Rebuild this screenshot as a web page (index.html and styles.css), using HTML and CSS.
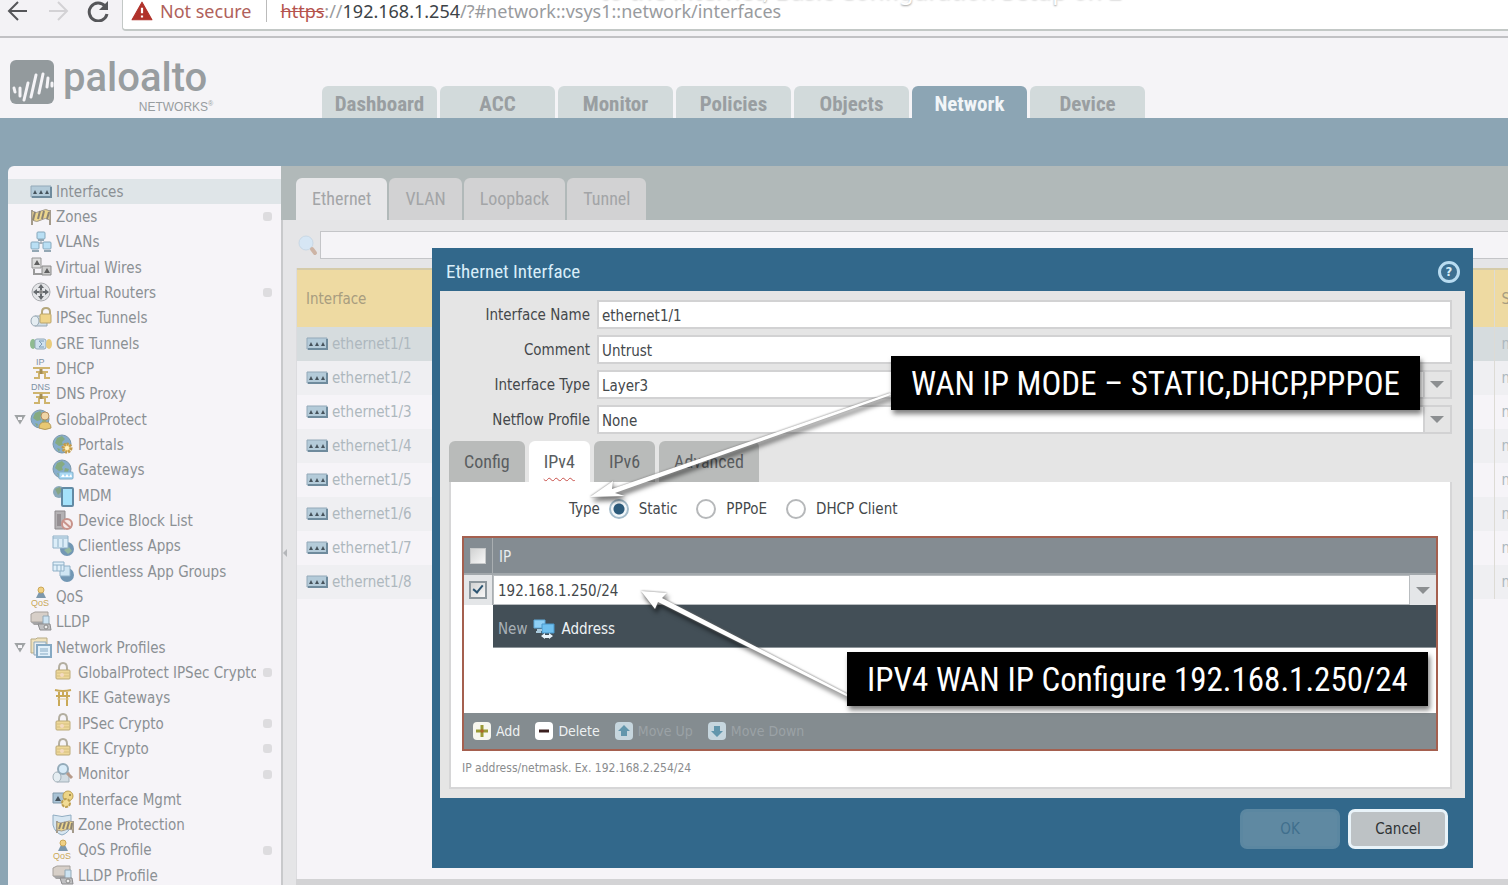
FILE: index.html
```html
<!DOCTYPE html>
<html lang="en">
<head>
    <meta charset="UTF-8">
    <meta name="viewport" content="width=device-width, initial-scale=1.0">
    <title>Network - Interfaces</title>
    <link rel="stylesheet" href="styles.css">
</head>
<body>

<!-- icon set -->
<svg class="sprite" aria-hidden="true">
    <symbol id="i-port" viewBox="0 0 22 22">
        <path d="M1 5h20v11H1z" fill="#b4cbd9"/><path d="M1 5h20v11H1z" fill="none" stroke="#93a9b9"/><path d="M2 16h19V6" fill="none" stroke="#6f8b9d" stroke-width="2"/>
        <path d="M3 13l2-4 2 4zM9 13l2-4 2 4zM15 13l2-4 2 4z" fill="#46535c"/>
    </symbol>
    <symbol id="i-zones" viewBox="0 0 22 22">
        <path d="M2 4v15M20 4v15" stroke="#a49b8c" stroke-width="2"/><path d="M2 5q4 3 9 0t9 0v9q-5-3-9 0t-9 0z" fill="#ecd68d" stroke="#a39c90"/>
        <path d="M5 6l-2 8M10 5l-2 8M14 5l-2 8M19 6l-2 7" stroke="#8b8373" stroke-width="2"/>
    </symbol>
    <symbol id="i-vlan" viewBox="0 0 22 22">
        <path d="M11 9v4M5 15v-3h12v3" fill="none" stroke="#8d9ba5"/>
        <g fill="#b9dff4" stroke="#87a8bc"><rect x="7" y="1" width="8" height="7" rx="1"/><rect x="1" y="11" width="8" height="7" rx="1"/><rect x="13" y="11" width="8" height="7" rx="1"/></g>
        <path d="M8 9h6M2 20h7M14 20h7" stroke="#93a7b4" stroke-width="2"/>
    </symbol>
    <symbol id="i-wire" viewBox="0 0 22 22">
        <path d="M4 12v5h9" fill="none" stroke="#999" stroke-width="2"/><path d="M2 1h9v10H2z" fill="#ddd" stroke="#949494"/><path d="M12 9h9v9h-9z" fill="#ccc" stroke="#8a8a8a"/>
        <path d="M4 8l3-5 3 5zM14 16l3-5 3 5z" fill="#606060"/>
    </symbol>
    <symbol id="i-router" viewBox="0 0 22 22">
        <circle cx="11" cy="10" r="9" fill="#e4e5e8" stroke="#a7a9ad"/><circle cx="11" cy="10" r="2" fill="#888"/>
        <path d="M11 2l3 4h-2v2h-2V6H8zM11 18l3-4h-2v-2h-2v2H8zM3 10l4-3v2h2v2H7v2zM19 10l-4-3v2h-2v2h2v2z" fill="#666a6e"/>
    </symbol>
    <symbol id="i-ipsec" viewBox="0 0 22 22">
        <path d="M5 9h12v10H5z" fill="#cfdde8" stroke="#96a6b2"/><ellipse cx="5" cy="14" rx="4" ry="5" fill="#e5edf2" stroke="#96a6b2"/>
        <path d="M12 7V5q0-4 4-4t4 4v2" fill="none" stroke="#b5a77c" stroke-width="2"/><rect x="10" y="7" width="11" height="9" rx="1" fill="#efd48a" stroke="#bba56c"/>
    </symbol>
    <symbol id="i-gre" viewBox="0 0 22 22">
        <ellipse cx="3" cy="11" rx="3" ry="5" fill="#8fbb91"/><rect x="5" y="6" width="11" height="10" rx="2" fill="#cfe1ef" stroke="#93a9b9"/><ellipse cx="19" cy="11" rx="3" ry="5" fill="#e9cc7d"/><path d="M14 8H9l3 3-3 3h5" fill="none" stroke="#7f9db6"/>
    </symbol>
    <symbol id="i-dhcp" viewBox="0 0 22 22">
        <text x="6" y="7" class="glyph">IP</text><path d="M3 10h17M6 14h12M4 20h5v-5h6v5h5" fill="none" stroke="#cfb46e" stroke-width="2"/><path d="M11 11v5" stroke="#a48d52" stroke-width="3"/>
    </symbol>
    <symbol id="i-dns" viewBox="0 0 22 22">
        <text x="1" y="7" class="glyph">DNS</text><path d="M3 10h17M6 14h12M4 20h5v-5h6v5h5" fill="none" stroke="#cfb46e" stroke-width="2"/><path d="M11 11v5" stroke="#a48d52" stroke-width="3"/>
    </symbol>
    <symbol id="i-globe" viewBox="0 0 22 22">
        <circle cx="10" cy="10" r="9" fill="#86adcb" stroke="#7c98ab"/><path d="M5 4l5-2 3 3-3 3 1 3-4 1-4-3zM13 9l4 1-2 5-3-2zM5 14l3 1-1 3z" fill="#86aa80"/>
    </symbol>
    <symbol id="i-gp" viewBox="0 0 22 22">
        <use href="#i-globe"/><circle cx="15" cy="7" r="4" fill="#f0d5a7" stroke="#b18d63"/><path d="M9 19q0-6 6-6t6 6q-6 3-12 0z" fill="#e8c872" stroke="#b59c5c"/>
    </symbol>
    <symbol id="i-portal" viewBox="0 0 22 22">
        <use href="#i-globe"/><circle cx="15" cy="14" r="4" fill="#f0cf7d" stroke="#c29a4b" stroke-width="3" stroke-dasharray="2 1"/><circle cx="15" cy="14" r="2" fill="#fff2c4"/>
    </symbol>
    <symbol id="i-gateway" viewBox="0 0 22 22">
        <use href="#i-globe"/><rect x="7" y="13" width="14" height="7" rx="1" fill="#a8d8f3" stroke="#7facc7"/><path d="M9 18l2-3 2 3zM13 18l2-3 2 3zM17 18l2-3 1 3z" fill="#fff"/>
    </symbol>
    <symbol id="i-mdm" viewBox="0 0 22 22">
        <circle cx="7" cy="7" r="6" fill="#8aa9ba"/><path d="M3 4l5-2 2 4-4 4z" fill="#86a484"/><rect x="10" y="3" width="11" height="18" rx="1" fill="#a5e2fb" stroke="#628aa4" stroke-width="2"/>
    </symbol>
    <symbol id="i-block" viewBox="0 0 22 22">
        <path d="M3 1h10v18H3z" fill="#b4b1b4" stroke="#8d898c"/><path d="M5 4h4v12H5z" fill="#958f93"/><circle cx="15" cy="14" r="5" fill="#f4e8e5" stroke="#c8928a" stroke-width="2"/><path d="M11 11l8 7" stroke="#c8928a" stroke-width="2"/>
    </symbol>
    <symbol id="i-app" viewBox="0 0 22 22">
        <circle cx="15" cy="14" r="7" fill="#7297b4"/><path d="M12 15l5-3 3 4-4 3z" fill="#93b8a0"/><path d="M1 1h15v12H1z" fill="#dcedf8" stroke="#8fb0c7"/><path d="M1 3h15M6 4v8M11 4v8" stroke="#8fb0c7"/>
    </symbol>
    <symbol id="i-appgroup" viewBox="0 0 22 22">
        <circle cx="15" cy="14" r="7" fill="#7297b4"/><path d="M8 5h10v10H8z" fill="#cfe5f3" stroke="#8fb0c7"/><path d="M1 1h11v9H1z" fill="#e1f0fa" stroke="#8fb0c7"/><path d="M1 4h11M5 4v6M9 4v6" stroke="#8fb0c7"/>
    </symbol>
    <symbol id="i-qos" viewBox="0 0 22 22">
        <path d="M6 12l3-6h4l3 6z" fill="#7d98ad"/><circle cx="11" cy="4" r="3" fill="#f1d185" stroke="#cba758"/><text x="1" y="20" class="glyph gold">QoS</text>
    </symbol>
    <symbol id="i-lldp" viewBox="0 0 22 22">
        <path d="M1 3l4-2h13v10H1z" fill="#d7cfc8" stroke="#a6a19c"/><path d="M1 11h12v3H4z" fill="#a5a4a5"/><path d="M13 5h6v11h-6z" fill="#cde3f2" stroke="#93a9b7"/><path d="M8 13h12l1 6H10z" fill="#c0c0c2" stroke="#8c8c8e"/><circle cx="16" cy="16" r="2" fill="#eee" stroke="#888"/>
    </symbol>
    <symbol id="i-profiles" viewBox="0 0 22 22">
        <path d="M1 2h5l1-1h10v15H1z" fill="#efe2bd" stroke="#b7aa85"/><path d="M4 5h12v13H4z" fill="#e8eef2" stroke="#90a9ba"/><path d="M7 8h14v12H7z" fill="#e2f0fa" stroke="#86a9c3" stroke-width="2"/><path d="M10 12h8M10 14h8M10 17h8" stroke="#86a9c3"/>
    </symbol>
    <symbol id="i-lock" viewBox="0 0 22 22">
        <path d="M7 9V6q0-5 4-5t4 5v3" fill="none" stroke="#b3aea0" stroke-width="2"/><rect x="4" y="8" width="14" height="9" rx="1" fill="#eed89a" stroke="#bba977"/><path d="M5 11h12M5 14h12" stroke="#d6be80"/><circle cx="10" cy="13" r="2" fill="#f4dac2"/>
    </symbol>
    <symbol id="i-torii" viewBox="0 0 22 22">
        <path d="M3 3q8 2 16 0M4 9h14M11 4v4M7 5v14M15 5v14" fill="none" stroke="#c9a958" stroke-width="2"/><path d="M5 12h12" stroke="#dfc98e"/>
    </symbol>
    <symbol id="i-monitor" viewBox="0 0 22 22">
        <path d="M5 9h12v10H5z" fill="#d2dce3" stroke="#a3b0b9"/><ellipse cx="5" cy="14" rx="4" ry="5" fill="#e5edf2" stroke="#a3b0b9"/><circle cx="11" cy="6" r="5" fill="#d8ebf8" stroke="#94abba" stroke-width="2"/><path d="M15 10l5 5" stroke="#b79a8a" stroke-width="3"/>
    </symbol>
    <symbol id="i-mgmt" viewBox="0 0 22 22">
        <path d="M1 4h14v10H1z" fill="#a9c3d6" stroke="#8199aa"/><path d="M3 12l3-5 3 5z" fill="#46535c"/><circle cx="16" cy="7" r="5" fill="#ecd486" stroke="#bd9f52"/><circle cx="14" cy="14" r="4" fill="#f2dc94" stroke="#bd9f52" stroke-width="2" stroke-dasharray="3 1"/><circle cx="18" cy="6" r="1" fill="#8c7a47"/>
    </symbol>
    <symbol id="i-zoneprot" viewBox="0 0 22 22">
        <path d="M1 1q9 3 18 0v10q-2 8-9 10-7-2-9-10z" fill="#d7e6f1" stroke="#8facc2"/><path d="M5 7v12M21 7v12" stroke="#a49b8c" stroke-width="2"/><path d="M5 8q3 2 8 0t8 0v8q-5-2-8 0t-8 0z" fill="#ecd68d" stroke="#a39c90"/><path d="M9 9l-2 6M13 8l-2 7M17 8l-2 7M20 9l-1 6" stroke="#8b8373" stroke-width="2"/>
    </symbol>
    <symbol id="i-search" viewBox="0 0 22 22">
        <circle cx="8" cy="8" r="7" fill="#d6e6f4" stroke="#c9d8e5"/><path d="M14 14l3 4" stroke="#cdb4a5" stroke-width="4" stroke-linecap="round"/>
    </symbol>
</svg>

<div class="browser-bar">
    <div class="nav-icons">
        <svg viewBox="0 0 22 22" aria-hidden="true"><path d="M20 11H3M11 2l-9 9 9 9" fill="none" stroke="#555659" stroke-width="2"/></svg>
        <svg viewBox="0 0 22 22" aria-hidden="true"><path d="M2 11h17M11 2l9 9-9 9" fill="none" stroke="#d3d2d5" stroke-width="2"/></svg>
        <svg viewBox="0 0 22 22" aria-hidden="true"><path d="M18 6a9 9 0 1 0 2 8" fill="none" stroke="#555659" stroke-width="3"/><path d="M21 1v9h-9z" fill="#555659"/></svg>
    </div>
    <div class="address-bar">
        <svg class="warning" viewBox="0 0 20 18" aria-hidden="true"><path d="M10 1L19 17H1z" fill="#b0322b" stroke="#b0322b" stroke-linejoin="round"/><path d="M10 6v5M10 13v2" stroke="#fff" stroke-width="2"/></svg>
        <span class="not-secure">Not secure</span>
        <span class="url"><s>https</s>://<b>192.168.1.254</b>/?#network::vsys1::network/interfaces</span>
    </div>
    <div class="video-title">to the internet, Basic Configuration Setup on 2</div>
</div>

<header class="app-header">
    <div class="logo">
        <svg viewBox="0 0 44 44" aria-hidden="true">
            <rect width="44" height="44" rx="6" fill="#939a9d"/>
            <g stroke="#f5f4f7" stroke-width="3" stroke-linecap="round"><path d="M4 28l1 4M10 28l0 8M18 23l-4 17M26 15l-5 22M33 14l-4 19M38 18l-1 9M42 23l0 3"/></g>
        </svg>
        <div class="logo-text">
            <span class="logo-name">paloalto</span>
            <span class="logo-sub">NETWORKS<sup>®</sup></span>
        </div>
    </div>
    <nav class="main-tabs">
        <a href="#">Dashboard</a>
        <a href="#">ACC</a>
        <a href="#">Monitor</a>
        <a href="#">Policies</a>
        <a href="#">Objects</a>
        <a href="#" class="active">Network</a>
        <a href="#">Device</a>
    </nav>
</header>

<div class="workspace">
    <aside class="sidebar">
        <ul class="tree">
            <li class="selected"><a href="#"><svg><use href="#i-port"/></svg>Interfaces</a></li>
            <li class="dot"><a href="#"><svg><use href="#i-zones"/></svg>Zones</a></li>
            <li><a href="#"><svg><use href="#i-vlan"/></svg>VLANs</a></li>
            <li><a href="#"><svg><use href="#i-wire"/></svg>Virtual Wires</a></li>
            <li class="dot"><a href="#"><svg><use href="#i-router"/></svg>Virtual Routers</a></li>
            <li><a href="#"><svg><use href="#i-ipsec"/></svg>IPSec Tunnels</a></li>
            <li><a href="#"><svg><use href="#i-gre"/></svg>GRE Tunnels</a></li>
            <li><a href="#"><svg><use href="#i-dhcp"/></svg>DHCP</a></li>
            <li><a href="#"><svg><use href="#i-dns"/></svg>DNS Proxy</a></li>
            <li class="open"><a href="#"><svg><use href="#i-gp"/></svg>GlobalProtect</a></li>
            <li class="child"><a href="#"><svg><use href="#i-portal"/></svg>Portals</a></li>
            <li class="child"><a href="#"><svg><use href="#i-gateway"/></svg>Gateways</a></li>
            <li class="child"><a href="#"><svg><use href="#i-mdm"/></svg>MDM</a></li>
            <li class="child"><a href="#"><svg><use href="#i-block"/></svg>Device Block List</a></li>
            <li class="child"><a href="#"><svg><use href="#i-app"/></svg>Clientless Apps</a></li>
            <li class="child"><a href="#"><svg><use href="#i-appgroup"/></svg>Clientless App Groups</a></li>
            <li><a href="#"><svg><use href="#i-qos"/></svg>QoS</a></li>
            <li><a href="#"><svg><use href="#i-lldp"/></svg>LLDP</a></li>
            <li class="open"><a href="#"><svg><use href="#i-profiles"/></svg>Network Profiles</a></li>
            <li class="child dot"><a href="#"><svg><use href="#i-lock"/></svg>GlobalProtect IPSec Crypto</a></li>
            <li class="child"><a href="#"><svg><use href="#i-torii"/></svg>IKE Gateways</a></li>
            <li class="child dot"><a href="#"><svg><use href="#i-lock"/></svg>IPSec Crypto</a></li>
            <li class="child dot"><a href="#"><svg><use href="#i-lock"/></svg>IKE Crypto</a></li>
            <li class="child dot"><a href="#"><svg><use href="#i-monitor"/></svg>Monitor</a></li>
            <li class="child"><a href="#"><svg><use href="#i-mgmt"/></svg>Interface Mgmt</a></li>
            <li class="child"><a href="#"><svg><use href="#i-zoneprot"/></svg>Zone Protection</a></li>
            <li class="child dot"><a href="#"><svg><use href="#i-qos"/></svg>QoS Profile</a></li>
            <li class="child"><a href="#"><svg><use href="#i-lldp"/></svg>LLDP Profile</a></li>
        </ul>
    </aside>

    <main class="content">
        <nav class="sub-tabs">
            <a href="#" class="active">Ethernet</a>
            <a href="#">VLAN</a>
            <a href="#">Loopback</a>
            <a href="#">Tunnel</a>
        </nav>
        <div class="content-body">
            <div class="splitter"></div>
            <div class="list">
                <div class="search-row">
                    <svg><use href="#i-search"/></svg>
                    <input type="text" aria-label="Search interfaces">
                </div>
                <div class="table-wrap">
                    <table class="interfaces">
                        <thead>
                            <tr><th>Interface</th><th class="edge">Security Zone</th></tr>
                        </thead>
                        <tbody>
                            <tr><td><svg><use href="#i-port"/></svg>ethernet1/1</td><td class="edge">none</td></tr>
                            <tr><td><svg><use href="#i-port"/></svg>ethernet1/2</td><td class="edge">none</td></tr>
                            <tr><td><svg><use href="#i-port"/></svg>ethernet1/3</td><td class="edge">none</td></tr>
                            <tr><td><svg><use href="#i-port"/></svg>ethernet1/4</td><td class="edge">none</td></tr>
                            <tr><td><svg><use href="#i-port"/></svg>ethernet1/5</td><td class="edge">none</td></tr>
                            <tr><td><svg><use href="#i-port"/></svg>ethernet1/6</td><td class="edge">none</td></tr>
                            <tr><td><svg><use href="#i-port"/></svg>ethernet1/7</td><td class="edge">none</td></tr>
                            <tr><td><svg><use href="#i-port"/></svg>ethernet1/8</td><td class="edge">none</td></tr>
                        </tbody>
                    </table>
                </div>
                <div class="scroll-track"></div>
            </div>
        </div>
    </main>
</div>

<section class="dialog" role="dialog" aria-labelledby="dialogTitle">
    <div class="dialog-header">
        <h2 id="dialogTitle">Ethernet Interface</h2>
        <button class="help" type="button" aria-label="Help">?</button>
    </div>
    <form class="dialog-body">
        <div class="fields">
            <label for="ifName">Interface Name</label>
            <input type="text" id="ifName" value="ethernet1/1">
            <label for="ifComment">Comment</label>
            <input type="text" id="ifComment" value="Untrust">
            <label for="ifType">Interface Type</label>
            <div class="select-box"><select id="ifType"><option>Layer3</option></select></div>
            <label for="netflow">Netflow Profile</label>
            <div class="select-box"><select id="netflow"><option>None</option></select></div>
        </div>

        <div class="form-tabs">
            <button type="button">Config</button>
            <button type="button" class="active invalid">IPv4</button>
            <button type="button">IPv6</button>
            <button type="button">Advanced</button>
        </div>

        <div class="panel">
            <div class="type-row" role="radiogroup" aria-labelledby="typeLabel">
                <span id="typeLabel">Type</span>
                <label><input type="radio" name="type" checked>Static</label>
                <label><input type="radio" name="type">PPPoE</label>
                <label><input type="radio" name="type">DHCP Client</label>
            </div>

            <div class="ip-grid">
                <div class="grid-head">
                    <span class="check-cell"><input type="checkbox" aria-label="Select all"></span>
                    <span class="head-label">IP</span>
                </div>
                <div class="grid-row">
                    <span class="check-cell"><input type="checkbox" aria-label="Select address" checked></span>
                    <input type="text" class="ip-input" aria-label="IP" value="192.168.1.250/24">
                    <button type="button" class="trigger" aria-label="Show addresses"></button>
                </div>
                <div class="new-row">
                    New
                    <svg viewBox="0 0 22 22" aria-hidden="true"><path d="M1 2h11v8H1z" fill="#8fd0f5" stroke="#5fa9d8"/><path d="M9 6h12v9H9z" fill="#6fc0ef" stroke="#4a97c9"/><path d="M4 12h5M3 14h5" stroke="#a9c9dc" stroke-width="2"/><path d="M8 18l4-3v2h4v-2l4 3-4 3v-1h-4v1z" fill="#e8f4fb"/></svg>
                    <a href="#">Address</a>
                </div>
                <div class="grid-space"></div>
                <div class="grid-foot">
                    <button type="button"><svg viewBox="0 0 18 18"><rect width="18" height="18" rx="4" fill="#f7f6ee"/><path d="M9 3v12M3 9h12" stroke="#9a9a35" stroke-width="3"/><path d="M9 7v4M7 9h4" stroke="#b5552a"/></svg>Add</button>
                    <button type="button"><svg viewBox="0 0 18 18"><rect width="18" height="18" rx="4" fill="#fff"/><path d="M4 9h10" stroke="#3b2020" stroke-width="3"/></svg>Delete</button>
                    <button type="button" disabled><svg viewBox="0 0 18 18"><rect width="18" height="18" rx="4" fill="#c6d6de"/><path d="M9 3l6 6h-3v5H6V9H3z" fill="#6296ac"/></svg>Move Up</button>
                    <button type="button" disabled><svg viewBox="0 0 18 18"><rect width="18" height="18" rx="4" fill="#c6d6de"/><path d="M9 15l6-6h-3V4H6v5H3z" fill="#6296ac"/></svg>Move Down</button>
                </div>
            </div>
            <p class="hint">IP address/netmask. Ex. 192.168.2.254/24</p>
        </div>
    </form>
    <div class="dialog-footer">
        <button type="button" class="btn" disabled>OK</button>
        <button type="button" class="btn cancel">Cancel</button>
    </div>

    <!-- tutorial notes over the dialog -->
    <svg class="arrows" aria-hidden="true">
        <path d="M158 249l23-16-1 8L458 145l1 2L183 245l10 3z"/>
        <path d="M209 343l26 2-5 5 191 99-1 2-194-97-3 7z"/>
    </svg>
    <div class="note note-mode">WAN IP MODE – STATIC,DHCP,PPPOE</div>
    <div class="note note-ip">IPV4 WAN IP Configure 192.168.1.250/24</div>
</section>

</body>
</html>
```
FILE: styles.css
```css
*, *::before, *::after {
    box-sizing: border-box;
}
body {
    display: flex;
    flex-direction: column;
    height: 100vh;
    margin: 0;
    overflow: hidden;
    position: relative;
    background-color: #8ca5b4;
    color: #8b9094;
    font-family: "DejaVu Sans Condensed", "DejaVu Sans", sans-serif;
    font-size: 15px;
}
a {
    color: inherit;
    text-decoration: none;
}
button, input, select {
    font: inherit;
    color: inherit;
}
.sprite {
    position: absolute;
    width: 0;
    height: 0;
}
.glyph {
    font: 9px "Liberation Sans", Arial, sans-serif;
    fill: #7d92a5;
}
.glyph.gold {
    fill: #c9a958;
}

/* browser bar */
.browser-bar {
    display: flex;
    flex: none;
    height: 38px;
    position: relative;
    overflow: hidden;
    background-color: #f3f2f5;
    border-bottom: 2px solid #c1c1c4;
    font-family: "Noto Sans", sans-serif;
    font-size: 18px;
}
.nav-icons {
    display: flex;
    gap: 18px;
    padding-left: 7px;
    width: 122px;
}
.nav-icons svg {
    width: 22px;
    height: 22px;
}
.address-bar {
    display: flex;
    flex: 1;
    align-items: center;
    height: 31px;
    padding: 0 0 7px 8px;
    background-color: #fff;
    border: solid #c3c8c6;
    border-width: 0 0 2px 1px;
    border-radius: 0 0 0 4px;
    white-space: nowrap;
}
.warning {
    width: 22px;
    height: 20px;
    margin-right: 7px;
}
.not-secure {
    color: #b0615b;
    padding-right: 14px;
    margin-right: 14px;
    border-right: 1px solid #bbb;
    line-height: 22px;
}
.url {
    color: #999b9e;
}
.url s {
    color: #b5534d;
}
.url b {
    color: #3c4347;
    font-weight: normal;
}
.video-title {
    position: absolute;
    top: -25px;
    left: 600px;
    color: #fff;
    font-size: 24px;
    line-height: 30px;
    text-shadow: 0 1px 2px #999;
    white-space: nowrap;
}

/* header */
.app-header {
    display: flex;
    flex: none;
    align-items: flex-end;
    height: 80px;
    background-color: #f5f4f7;
}
.logo {
    display: flex;
    gap: 9px;
    width: 322px;
    padding: 0 0 5px 10px;
    color: #989da0;
}
.logo svg {
    width: 44px;
    height: 44px;
    margin-top: 5px;
}
.logo-text {
    display: flex;
    flex-direction: column;
    font-family: Roboto, sans-serif;
}
.logo-name {
    font-size: 40px;
    line-height: 46px;
    font-weight: 500;
}
.logo-sub {
    align-self: flex-end;
    margin-right: -6px;
    font: 12px/12px "Liberation Sans", Arial, sans-serif;
}
.logo-sub sup {
    font-size: 7px;
    line-height: 0;
}
.main-tabs {
    display: flex;
    gap: 3px;
}
.main-tabs a {
    width: 115px;
    height: 32px;
    border-radius: 6px 6px 0 0;
    background-color: #d2dadb;
    color: #999ea1;
    font: bold 21px/36px "Liberation Sans Narrow", "Roboto Condensed", sans-serif;
    text-align: center;
}
.main-tabs a.active {
    background-color: #8ca5b4;
    color: #f1f5f8;
}

/* sidebar */
.workspace {
    display: flex;
    flex: 1;
    min-height: 0;
    padding: 48px 0 0 8px;
}
.sidebar {
    width: 273px;
    flex: none;
    overflow: hidden;
    background-color: #f6f4f8;
    border-radius: 6px 0 0 0;
}
.tree {
    list-style: none;
    margin: 0;
    padding: 13px 0 0;
}
.tree li {
    display: flex;
    align-items: center;
    height: 25px;
    padding: 0 9px 0 6px;
}
.tree li:nth-child(3n) {
    height: 26px;
}
.tree li.selected {
    background-color: #dfe5e8;
}
.tree a {
    display: flex;
    flex: 1;
    align-items: center;
    gap: 4px;
    min-width: 0;
    margin-left: 16px;
    overflow: hidden;
    white-space: nowrap;
}
.tree svg {
    flex: none;
    width: 22px;
    height: 22px;
}
.tree .child a {
    margin-left: 38px;
}
.tree .open::before {
    content: "";
    width: 12px;
    height: 10px;
    margin-right: -12px;
    background: linear-gradient(#f6f4f8, #f6f4f8) 50% 2px / 4px 3px no-repeat #a0a3a5;
    clip-path: polygon(0 0, 100% 0, 50% 100%);
}
.tree .dot::after {
    content: "";
    width: 9px;
    height: 9px;
    margin-left: 7px;
    border-radius: 3px;
    background-color: #dddcdf;
}

/* interface list */
.content {
    display: flex;
    flex: 1;
    flex-direction: column;
    min-width: 0;
    background-color: #e5e5e7;
}
.sub-tabs {
    display: flex;
    gap: 2px;
    align-items: flex-end;
    height: 54px;
    padding-left: 15px;
    background-color: #b1b9b9;
}
.sub-tabs a {
    height: 42px;
    padding: 0 16px;
    border-radius: 6px 6px 0 0;
    background-color: #d2d2d3;
    color: #a3a5a7;
    font: 18px/42px "Liberation Sans Narrow", "Roboto Condensed", sans-serif;
}
.sub-tabs a.active {
    background-color: #e7e7e9;
}
.content-body {
    display: flex;
    flex: 1;
    min-height: 0;
}
.splitter {
    display: flex;
    align-items: center;
    width: 15px;
    border-left: 2px solid #c8c9cb;
}
.splitter::before {
    content: "";
    border: 4px solid transparent;
    border-right-color: #b4b6b9;
    border-left: 0;
}
.list {
    display: flex;
    flex: 1;
    flex-direction: column;
    min-width: 0;
}
.search-row {
    display: flex;
    padding: 11px 0 9px 2px;
}
.search-row svg {
    width: 22px;
    height: 22px;
    margin-top: 4px;
}
.search-row input {
    flex: 1;
    min-width: 0;
    height: 28px;
    border: 1px solid #c4c5c8;
    border-right: 0;
    background-color: #f5f4f7;
}
.table-wrap {
    flex: 1;
    min-height: 0;
    overflow: hidden;
    background-color: #f6f4f8;
    border-left: 1px solid #dcdcdf;
}
.interfaces {
    width: 100%;
    table-layout: fixed;
    border-collapse: collapse;
}
.interfaces th {
    height: 58px;
    padding: 0 9px;
    background-color: #eedaa2;
    border-top: 2px solid #d5cba9;
    color: #a89d7f;
    font-weight: normal;
    text-align: left;
}
.interfaces td {
    height: 34px;
    padding: 0 9px;
    color: #aeb8be;
    vertical-align: middle;
}
.interfaces td svg {
    width: 22px;
    height: 22px;
    margin-right: 4px;
    vertical-align: middle;
}
.interfaces .edge {
    width: 14px;
    padding: 0 0 0 7px;
    overflow: hidden;
    border-left: 1px solid #dddbd5;
    white-space: nowrap;
}
.interfaces tbody tr:nth-child(even) {
    background-color: #efeff2;
}
.interfaces tbody tr:first-child {
    background-color: #d6dcde;
}
.scroll-track {
    height: 6px;
    background-color: #d3d3d5;
}

/* dialog */
.dialog {
    position: absolute;
    top: 248px;
    left: 432px;
    right: 35px;
    padding: 0 8px;
    background-color: #32688b;
    color: #44484b;
}
.dialog-header {
    display: flex;
    align-items: center;
    justify-content: space-between;
    height: 43px;
    padding: 4px 5px 0 6px;
}
.dialog-header h2 {
    margin: 0;
    color: #d9eef9;
    font: 19px/24px "Liberation Sans Narrow", "Roboto Condensed", sans-serif;
}
.help {
    width: 22px;
    height: 22px;
    padding: 0;
    border: 3px solid #b9dcf1;
    border-radius: 50%;
    background-color: #3c6f91;
    color: #d9eef9;
    font-size: 13px;
    font-weight: bold;
    line-height: 15px;
}
.dialog-body {
    padding: 9px 13px 9px 9px;
    background-color: #e5e5e5;
}
.fields {
    display: grid;
    grid-template-columns: 141px 1fr;
    gap: 6px 7px;
    align-items: center;
}
.fields > label {
    text-align: right;
}
.fields input, .fields select {
    width: 100%;
    height: 29px;
    padding: 2px 3px 0;
    border: 2px solid #d2d2d3;
    border-radius: 0;
    background-color: #fff;
}
.fields select {
    appearance: none;
    display: block;
}
.select-box {
    position: relative;
}
.select-box::after {
    content: "";
    position: absolute;
    top: 0;
    right: 0;
    width: 29px;
    height: 29px;
    border: 2px solid #d2d2d3;
    background-color: #e5e5e5;
    pointer-events: none;
}
.select-box::before, .trigger::before {
    content: "";
    border: 7px solid transparent;
    border-top-color: #8c8f91;
    border-bottom: 0;
}
.select-box::before {
    position: absolute;
    z-index: 1;
    top: 11px;
    right: 8px;
    pointer-events: none;
}
.form-tabs {
    display: flex;
    gap: 4px;
    margin-top: 7px;
}
.form-tabs button {
    height: 41px;
    padding: 0 15px;
    border: 0;
    border-radius: 6px 6px 0 0;
    background-color: #b9bbba;
    color: #595d60;
    font: 18px/40px "Liberation Sans Narrow", "Roboto Condensed", sans-serif;
}
.form-tabs button.active {
    background-color: #fff;
}
.form-tabs button.invalid {
    text-decoration: underline wavy #c8504a 1px;
    text-underline-offset: 9px;
}
.panel {
    padding: 12px 12px 11px 11px;
    background-color: #fff;
    border: 2px solid #d6d6d7;
    border-top: 0;
}
.type-row {
    display: flex;
    align-items: center;
    height: 30px;
    padding-left: 107px;
}
.type-row label {
    display: flex;
    align-items: center;
    gap: 10px;
    margin-left: 9px;
}
.type-row label + label {
    margin-left: 19px;
}
.type-row input {
    appearance: none;
    width: 20px;
    height: 20px;
    margin: 0;
    border: 2px solid #b6b8ba;
    border-radius: 50%;
    background-color: #fff;
}
.type-row input:checked {
    border-color: #a4bccb;
    background: radial-gradient(circle, #2d5b7b 5px, #f2f7fa 6px);
}
.ip-grid {
    margin-top: 12px;
    border: 2px solid #a5604f;
    background-color: #fff;
}
.grid-head, .grid-row {
    display: flex;
    align-items: stretch;
}
.grid-head {
    height: 37px;
    background-color: #848c92;
    color: #e9edef;
    border-bottom: 2px solid #a2a8ac;
}
.check-cell {
    display: flex;
    align-items: center;
    justify-content: center;
    width: 29px;
    border-right: 1px solid #a9aeb1;
}
.check-cell input {
    appearance: none;
    width: 16px;
    height: 16px;
    margin: 0;
    background: linear-gradient(135deg, #d2d3d3, #f7f7f7);
    border: 1px solid #c7c9ca;
}
.check-cell input:checked {
    width: 18px;
    height: 18px;
    border: 2px solid #8d979d;
}
.check-cell input:checked::before {
    content: "";
    display: block;
    width: 6px;
    height: 10px;
    margin: 0 0 0 4px;
    border: solid #2d5673;
    border-width: 0 2px 2px 0;
    transform: rotate(40deg);
}
.head-label {
    padding-left: 6px;
    line-height: 38px;
}
.grid-row {
    height: 30px;
    background-color: #e4e6e8;
}
.ip-input {
    flex: 1;
    min-width: 0;
    padding: 2px 4px 0;
    border: 1px solid #b9bdc0;
    background-color: #fff;
}
.trigger {
    display: flex;
    align-items: center;
    justify-content: center;
    width: 26px;
    padding: 0;
    border: 0;
    background-color: #e4e6e8;
}
.new-row {
    display: flex;
    align-items: center;
    gap: 6px;
    height: 43px;
    margin-left: 29px;
    padding: 5px 5px 0;
    background-color: #434f57;
    border-bottom: 1px solid #8d959a;
    color: #a9b1b6;
}
.new-row svg {
    width: 22px;
    height: 22px;
}
.new-row a {
    color: #eef2f4;
}
.grid-space {
    height: 65px;
}
.grid-foot {
    display: flex;
    gap: 15px;
    height: 36px;
    padding-left: 9px;
    background-color: #848c90;
}
.grid-foot button {
    display: flex;
    align-items: center;
    gap: 5px;
    padding: 0;
    border: 0;
    background: none;
    color: #eef1f2;
    font-size: 14px;
}
.grid-foot button:disabled {
    color: #9ba2a6;
}
.grid-foot svg {
    width: 18px;
    height: 18px;
}
.hint {
    margin: 9px 0 0;
    color: #8a8c8e;
    font-size: 12px;
    line-height: 16px;
}
.dialog-footer {
    display: flex;
    justify-content: flex-end;
    gap: 8px;
    height: 70px;
    padding: 11px 17px 0 0;
}
.btn {
    width: 100px;
    height: 40px;
    border: 3px solid #5b87a1;
    border-radius: 7px;
    background-color: #5f89a2;
}
.btn:disabled {
    color: #406f8d;
}
.btn.cancel {
    border-color: #e9f3f9;
    background-color: #bdc2c5;
    color: #2f3335;
}

/* notes */
.arrows {
    position: absolute;
    z-index: 2;
    top: 0;
    left: 0;
    width: 100%;
    height: 100%;
    fill: #fff;
    filter: drop-shadow(0 0 1px #777) drop-shadow(2px 4px 2px rgba(0, 0, 0, 0.5));
    pointer-events: none;
}
.note {
    position: absolute;
    z-index: 2;
    padding: 2px 20px 0;
    background-color: #000;
    box-shadow: 2px 4px 5px rgba(0, 0, 0, 0.5);
    color: #fff;
    font: 33px/52px "Liberation Sans Narrow", "Roboto Condensed", sans-serif;
    white-space: nowrap;
}
.note-mode {
    top: 108px;
    left: 459px;
}
.note-ip {
    top: 404px;
    left: 415px;
}
```
